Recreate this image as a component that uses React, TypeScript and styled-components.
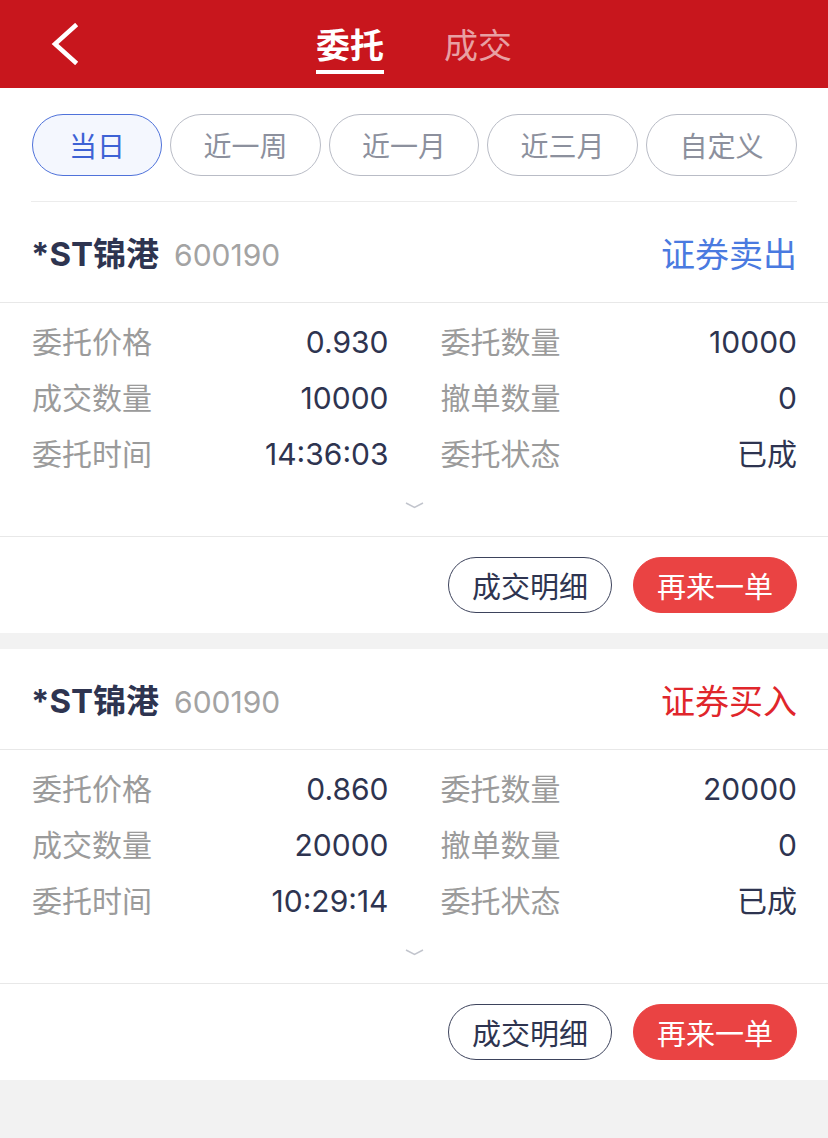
import React from 'react';
import styled, { createGlobalStyle } from 'styled-components';

const GlobalStyle = createGlobalStyle`
  html, body {
    margin: 0;
    padding: 0;
    background: #f2f2f2;
  }
  * {
    box-sizing: border-box;
  }
  body {
    font-family: Inter, 'Noto Sans CJK SC', sans-serif;
  }
`;

const Page = styled.div`
  min-height: 1138px;
  background: #f2f2f2;
`;

const NavBar = styled.div`
  height: 88px;
  background: #c8161d;
  display: flex;
  align-items: center;
  justify-content: center;
  position: relative;
`;

const BackButton = styled.div`
  position: absolute;
  left: 50px;
  top: 22px;
  width: 32px;
  height: 44px;
  display: flex;
  align-items: center;
`;

const Tabs = styled.div`
  display: flex;
  gap: 60px;
  height: 100%;
`;

const Tab = styled.div<{ $active?: boolean }>`
  position: relative;
  display: flex;
  align-items: center;
  padding-bottom: 2px;
  font-size: 34px;
  font-weight: ${(p) => (p.$active ? 700 : 400)};
  color: ${(p) => (p.$active ? '#ffffff' : 'rgba(255, 255, 255, 0.6)')};

  &::after {
    content: '';
    display: ${(p) => (p.$active ? 'block' : 'none')};
    position: absolute;
    left: 0;
    right: 0;
    bottom: 14px;
    height: 4px;
    background: #ffffff;
  }
`;

const FilterBar = styled.div`
  background: #ffffff;
`;

const FilterInner = styled.div`
  margin: 0 31px;
  padding: 26px 0 25px 1px;
  display: flex;
  gap: 8px;
  border-bottom: 1px solid #ececec;
`;

const Chip = styled.div<{ $active?: boolean; $w: number }>`
  width: ${(p) => p.$w}px;
  height: 62px;
  border-radius: 31px;
  display: flex;
  align-items: center;
  justify-content: center;
  font-size: 28px;
  border: 1px solid ${(p) => (p.$active ? '#4f72da' : '#b9bcc6')};
  background: ${(p) => (p.$active ? '#f4f7fe' : '#ffffff')};
  color: ${(p) => (p.$active ? '#3d62d5' : '#8c909d')};
`;

const Card = styled.div`
  background: #ffffff;
  & + & {
    margin-top: 16px;
  }
`;

const CardHeader = styled.div`
  height: 101px;
  padding: 0 31px 0 31px;
  display: flex;
  align-items: center;
  justify-content: space-between;
  border-bottom: 1px solid #e8e8e8;
`;

const StockName = styled.div`
  display: flex;
  align-items: baseline;
  gap: 15px;
`;

const Name = styled.span`
  font-size: 33px;
  font-weight: 700;
  color: #2e3450;
`;

const Code = styled.span`
  font-size: 30px;
  color: #a3a3a3;
`;

const Direction = styled.span<{ $side: 'buy' | 'sell' }>`
  font-size: 34px;
  color: ${(p) => (p.$side === 'buy' ? '#e0262b' : '#4a7ae0')};
`;

const CardBody = styled.div`
  padding: 11px 31px 0 32px;
  border-bottom: 1px solid #e8e8e8;
`;

const InfoGrid = styled.div`
  display: grid;
  grid-template-columns: 1fr 1fr;
  column-gap: 52px;
`;

const InfoRow = styled.div`
  height: 56px;
  line-height: 56px;
  display: flex;
  align-items: baseline;
  justify-content: space-between;
`;

const Label = styled.span`
  font-size: 30px;
  color: #9b9b9b;
`;

const Value = styled.span`
  font-size: 30px;
  color: #2e3450;
`;

const Expand = styled.div`
  height: 54px;
  display: flex;
  justify-content: center;
  padding-top: 20px;
`;

const CardFooter = styled.div`
  padding: 20px 31px 20px 0;
  display: flex;
  justify-content: flex-end;
  gap: 21px;
`;

const ActionButton = styled.div<{ $primary?: boolean }>`
  width: 164px;
  height: 56px;
  border-radius: 28px;
  display: flex;
  align-items: center;
  justify-content: center;
  font-size: 29px;
  border: 1px solid ${(p) => (p.$primary ? '#ea4343' : '#3d435c')};
  background: ${(p) => (p.$primary ? '#ea4343' : '#ffffff')};
  color: ${(p) => (p.$primary ? '#ffffff' : '#2e3450')};
`;

type Order = {
  name: string;
  code: string;
  side: 'buy' | 'sell';
  price: string;
  amount: string;
  filled: string;
  cancelled: string;
  time: string;
  status: string;
};

const orders: Order[] = [
  {
    name: '*ST锦港',
    code: '600190',
    side: 'sell',
    price: '0.930',
    amount: '10000',
    filled: '10000',
    cancelled: '0',
    time: '14:36:03',
    status: '已成',
  },
  {
    name: '*ST锦港',
    code: '600190',
    side: 'buy',
    price: '0.860',
    amount: '20000',
    filled: '20000',
    cancelled: '0',
    time: '10:29:14',
    status: '已成',
  },
];

const chips = [
  { text: '当日', w: 130 },
  { text: '近一周', w: 151 },
  { text: '近一月', w: 150 },
  { text: '近三月', w: 151 },
  { text: '自定义', w: 151 },
];

const OrderCard = ({ order }: { order: Order }) => {
  const rows: [string, string][] = [
    ['委托价格', order.price],
    ['委托数量', order.amount],
    ['成交数量', order.filled],
    ['撤单数量', order.cancelled],
    ['委托时间', order.time],
    ['委托状态', order.status],
  ];
  return (
    <Card>
      <CardHeader>
        <StockName>
          <Name>{order.name}</Name>
          <Code>{order.code}</Code>
        </StockName>
        <Direction $side={order.side}>{order.side === 'buy' ? '证券买入' : '证券卖出'}</Direction>
      </CardHeader>
      <CardBody>
        <InfoGrid>
          {rows.map(([label, value]) => (
            <InfoRow key={label}>
              <Label>{label}</Label>
              <Value>{value}</Value>
            </InfoRow>
          ))}
        </InfoGrid>
        <Expand>
          <svg width="19" height="7" viewBox="0 0 19 7">
            <polyline points="1,1 9.5,5.5 18,1" fill="none" stroke="#c2c5cd" strokeWidth="1.5" />
          </svg>
        </Expand>
      </CardBody>
      <CardFooter>
        <ActionButton>成交明细</ActionButton>
        <ActionButton $primary>再来一单</ActionButton>
      </CardFooter>
    </Card>
  );
};

export default function App() {
  return (
    <Page>
      <GlobalStyle />
      <NavBar>
        <BackButton>
          <svg width="30" height="42" viewBox="0 0 30 42">
            <polyline
              points="25,3 5,21 25,39"
              fill="none"
              stroke="#ffffff"
              strokeWidth="4.5"
              strokeLinecap="square"
            />
          </svg>
        </BackButton>
        <Tabs>
          <Tab $active>委托</Tab>
          <Tab>成交</Tab>
        </Tabs>
      </NavBar>
      <FilterBar>
        <FilterInner>
          {chips.map((c, i) => (
            <Chip key={c.text} $w={c.w} $active={i === 0}>
              {c.text}
            </Chip>
          ))}
        </FilterInner>
      </FilterBar>
      {orders.map((o, i) => (
        <OrderCard key={i} order={o} />
      ))}
    </Page>
  );
}
